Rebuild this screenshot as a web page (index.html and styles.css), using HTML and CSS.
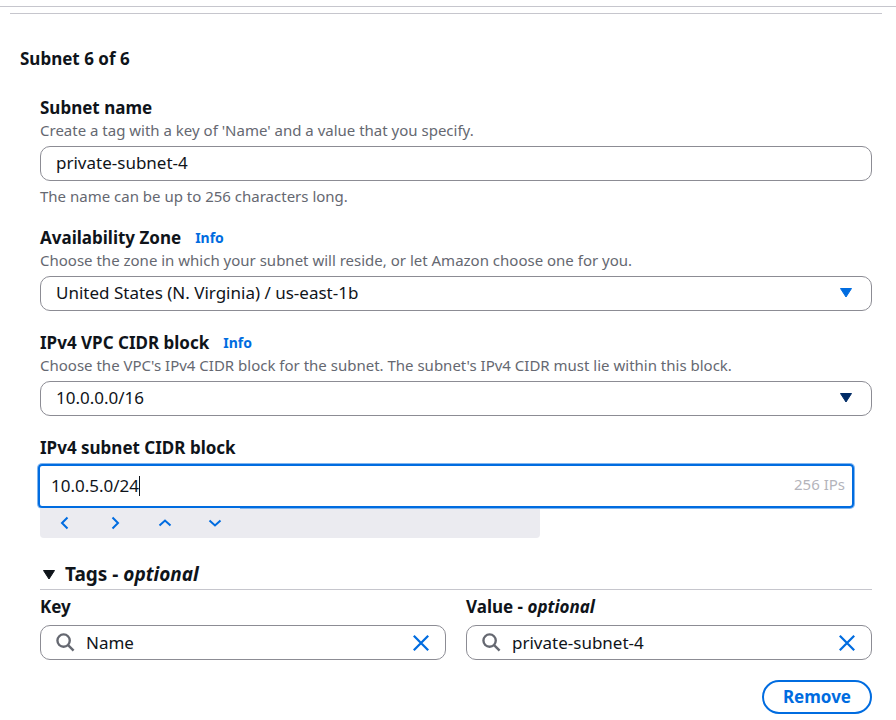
FILE: index.html
```html
<!DOCTYPE html>
<html lang="en">
<head>
<meta charset="utf-8">
<meta name="viewport" content="width=device-width, initial-scale=1">
<title>Create subnet</title>
<link rel="stylesheet" href="styles.css">
</head>
<body>
<main class="page">
  <hr class="divider divider-inset">
  <form class="subnet">
    <h2 class="subnet-title">Subnet 6 of 6</h2>
    <div class="fields">
      <div class="field">
        <label class="label" for="name">Subnet name</label>
        <p class="hint">Create a tag with a key of 'Name' and a value that you specify.</p>
        <input class="control" id="name" type="text" value="private-subnet-4">
        <p class="hint hint-below">The name can be up to 256 characters long.</p>
      </div>

      <div class="field">
        <div class="label-row"><label class="label" for="zone">Availability Zone</label><a class="info" href="#zone">Info</a></div>
        <p class="hint">Choose the zone in which your subnet will reside, or let Amazon choose one for you.</p>
        <div class="select">
          <select class="control" id="zone"><option>United States (N. Virginia) / us-east-1b</option></select>
          <svg class="caret caret-active" viewBox="0 0 14 12" aria-hidden="true"><path d="M1.5 1.5h11L7 10z"/></svg>
        </div>
      </div>

      <div class="field">
        <div class="label-row"><label class="label" for="vpc">IPv4 VPC CIDR block</label><a class="info" href="#vpc">Info</a></div>
        <p class="hint">Choose the VPC's IPv4 CIDR block for the subnet. The subnet's IPv4 CIDR must lie within this block.</p>
        <div class="select">
          <select class="control" id="vpc"><option>10.0.0.0/16</option></select>
          <svg class="caret" viewBox="0 0 14 12" aria-hidden="true"><path d="M1.5 1.5h11L7 10z"/></svg>
        </div>
      </div>

      <div class="field">
        <label class="label" for="cidr">IPv4 subnet CIDR block</label>
        <div class="cidr">
          <input class="cidr-input" id="cidr" type="text" value="10.0.5.0/24">
          <span class="cursor"></span>
          <span class="ip-count">256 IPs</span>
        </div>
        <div class="stepper">
          <button class="step" type="button" aria-label="Previous octet"><svg viewBox="0 0 16 16"><path d="M10.5 2.500 5 8l5.500 5.500"/></svg></button>
          <button class="step" type="button" aria-label="Next octet"><svg viewBox="0 0 16 16"><path d="m5.500 2.500 5.500 5.500-5.500 5.500"/></svg></button>
          <button class="step" type="button" aria-label="Increase"><svg viewBox="0 0 16 16"><path d="m2.500 10.500 5.500-5 5.500 5"/></svg></button>
          <button class="step" type="button" aria-label="Decrease"><svg viewBox="0 0 16 16"><path d="m2.500 5.500 5.500 5 5.500-5"/></svg></button>
        </div>
      </div>

      <section class="tags">
        <h3 class="tags-title">
          <button class="tags-toggle" type="button" aria-expanded="true">
            <svg class="tags-caret" viewBox="0 0 14 12" aria-hidden="true"><path d="M1.500 1.500h11L7 10z"/></svg>
            <span>Tags - <em>optional</em></span>
          </button>
        </h3>
        <div class="tag-row">
          <div class="tag">
            <label class="label" for="key">Key</label>
            <div class="control search">
              <svg class="search-icon" viewBox="0 0 20 20" aria-hidden="true"><circle cx="8" cy="8" r="6.500"/><path d="m12.500 12.500 6 6"/></svg>
              <input class="search-input" id="key" type="text" value="Name">
              <button class="clear" type="button" aria-label="Clear key"><svg viewBox="0 0 20 20"><path d="m2 2 16 16m0-16-16 16"/></svg></button>
            </div>
          </div>
          <div class="tag">
            <label class="label" for="value">Value - <em>optional</em></label>
            <div class="control search">
              <svg class="search-icon" viewBox="0 0 20 20" aria-hidden="true"><circle cx="8" cy="8" r="6.500"/><path d="m12.500 12.500 6 6"/></svg>
              <input class="search-input" id="value" type="text" value="private-subnet-4">
              <button class="clear" type="button" aria-label="Clear value"><svg viewBox="0 0 20 20"><path d="m2 2 16 16m0-16-16 16"/></svg></button>
            </div>
          </div>
        </div>
        <button class="remove" type="button">Remove</button>
      </section>
    </div>
  </form>
</main>
</body>
</html>
```
FILE: styles.css
```css
* {
  box-sizing: border-box;
}

body {
  margin: 0;
  padding-top: 6px;
  background: #fff;
  color: #0f141a;
  font-family: "Noto Sans", "Open Sans", sans-serif;
  font-size: 17px;
  line-height: 25px;
}

h2, h3, p {
  margin: 0;
}

input, select, button {
  margin: 0;
  padding: 0;
  border: 0;
  background: none;
  color: inherit;
  font: inherit;
  outline: 0;
}

button {
  cursor: pointer;
}

svg {
  display: block;
  flex: none;
}

.page {
  border-top: 1px solid #c6c6cd;
  padding-top: 6px;
}

.divider {
  margin: 0;
  border: 0;
  border-top: 1px solid #c6c6cd;
}

.divider-inset {
  margin: 0 14px 0 10px;
}

.subnet {
  padding: 32px 24px 6px 20px;
}

.subnet-title {
  font-size: 17px;
  font-weight: 700;
}

.fields {
  display: flex;
  flex-direction: column;
  gap: 19px;
  padding: 24px 0 0 20px;
}

.field, .tag {
  display: flex;
  flex-direction: column;
}

.label {
  font-weight: 700;
}

.label-row {
  display: flex;
  gap: 14px;
}

.info {
  color: #006ce0;
  font-size: 14px;
  font-weight: 700;
  text-decoration: none;
}

.hint {
  margin-bottom: 6px;
  color: #656871;
  font-size: 15px;
  line-height: 20px;
}

.hint-below {
  margin: 5px 0 0;
}

.control {
  width: 100%;
  height: 35px;
  padding: 0 15px 2px;
  border: 1px solid #8c8c94;
  border-radius: 10px;
}

.select {
  position: relative;
}

.select .control {
  display: block;
  appearance: none;
}

.caret {
  position: absolute;
  top: 11px;
  right: 19px;
}

.caret, .tags-caret {
  width: 14px;
  height: 12px;
  fill: #002b66;
  stroke: #002b66;
  stroke-width: 1;
  stroke-linejoin: round;
}

.caret-active {
  fill: #006ce0;
  stroke: #006ce0;
}

.cidr {
  display: flex;
  align-items: center;
  height: 44px;
  margin: 4px 18px 0 -2px;
  padding: 0 7px 1px 11px;
  border: 2px solid #006ce0;
  border-radius: 4px;
  box-shadow: 0 0 0 1px #80b5ef;
}

.cidr-input {
  field-sizing: content;
}

.cursor {
  width: 1px;
  height: 20px;
  background: #0f141a;
}

.ip-count {
  margin-left: auto;
  padding-bottom: 3px;
  color: #b4b4bb;
  font-size: 15px;
}

.stepper {
  display: flex;
  max-width: 500px;
  height: 30px;
  border-radius: 0 0 4px 4px;
  background: linear-gradient(#80b5ef, #80b5ef) 200px 0 / 100% 1px no-repeat #ebebf0;
}

.step {
  display: grid;
  place-items: center;
  width: 50px;
}

.step svg {
  width: 16px;
  height: 16px;
  fill: none;
  stroke: #006ce0;
  stroke-width: 2;
}

.tags {
  display: flex;
  flex-direction: column;
}

.tags-title {
  padding: 5px 0 2px;
  border-bottom: 1px solid #c6c6cd;
  font-size: 19px;
  font-weight: 700;
}

.tags-toggle {
  display: flex;
  align-items: center;
  gap: 9px;
  padding-left: 2px;
}

.tags-caret {
  fill: #0f141a;
  stroke: #0f141a;
}

.tag-row {
  display: grid;
  grid-template-columns: 1fr 1fr;
  gap: 20px;
  padding-top: 4px;
}

.tag {
  gap: 6px;
}

.search {
  display: flex;
  align-items: center;
  gap: 11px;
  padding-bottom: 0;
}

.search-icon {
  width: 19px;
  height: 19px;
  fill: none;
  stroke: #656871;
  stroke-width: 2.5;
}

.search-input {
  flex: 1;
  min-width: 0;
}

.clear svg {
  width: 18px;
  height: 18px;
  fill: none;
  stroke: #006ce0;
  stroke-width: 2.5;
}

.remove {
  align-self: flex-end;
  height: 34px;
  margin-top: 20px;
  padding: 0 19px;
  border: 2px solid #006ce0;
  border-radius: 20px;
  color: #006ce0;
  font-weight: 700;
  line-height: 28px;
}
```
